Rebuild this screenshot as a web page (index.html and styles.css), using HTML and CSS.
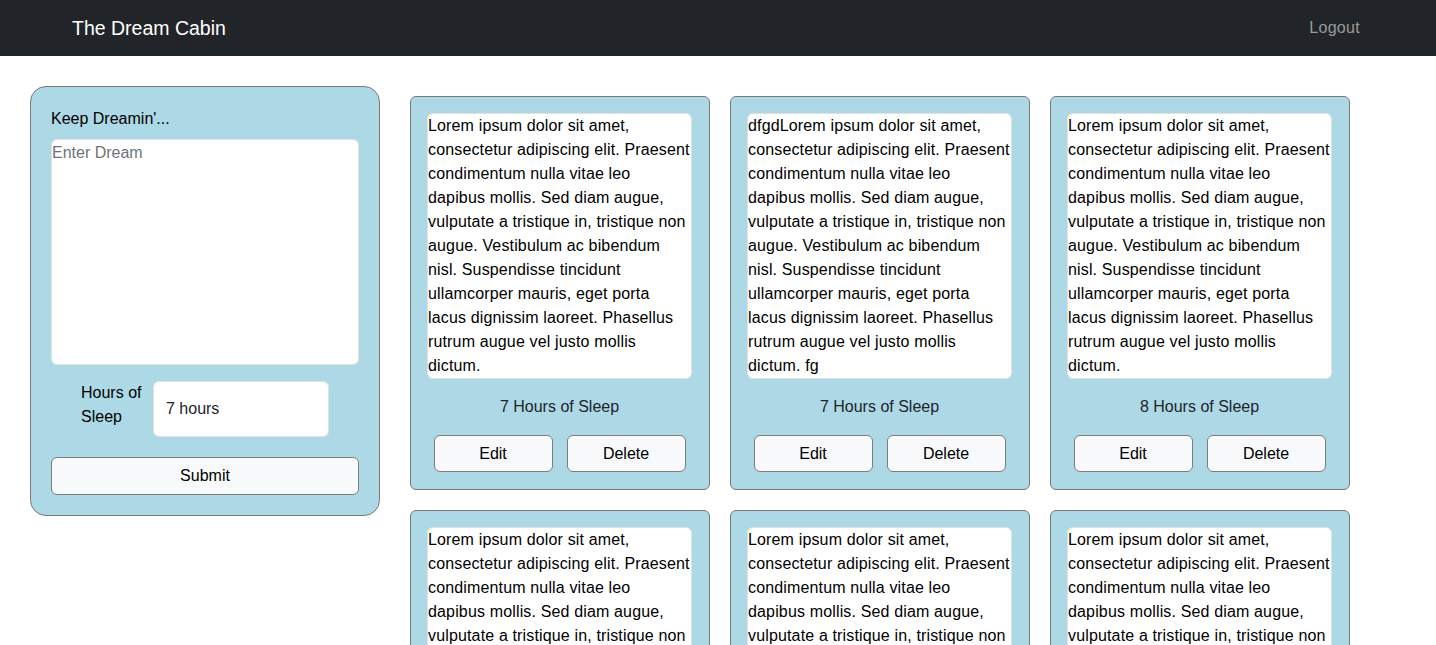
FILE: index.html
```html
<!DOCTYPE html>
<html lang="en">
<head>
    <meta charset="UTF-8">
    <meta name="viewport" content="width=device-width, initial-scale=1.0">
    <title>The Dream Cabin</title>
    <link rel="stylesheet" href="styles.css">
</head>
<body>
    <!-- 顶部导航 -->
    <nav class="navbar">
        <span class="brand">The Dream Cabin</span>
        <a class="nav-link" href="#">Logout</a>
    </nav>

    <div class="page">
        <!-- 新梦想表单 -->
        <form class="dream-form">
            <label for="dream" class="form-label">Keep Dreamin'...</label>
            <textarea id="dream" class="dream-input" placeholder="Enter Dream"></textarea>
            <div class="hours-row">
                <label for="hours" class="hours-label">Hours of Sleep</label>
                <input type="text" id="hours" class="hours-input" value="7 hours">
            </div>
            <button type="button" class="btn btn-block">Submit</button>
        </form>

        <!-- 梦想列表 -->
        <div class="dream-grid">
            <div class="dream-card">
                <div class="dream-text">Lorem ipsum dolor sit amet, consectetur adipiscing elit. Praesent condimentum nulla vitae leo dapibus mollis. Sed diam augue, vulputate a tristique in, tristique non augue. Vestibulum ac bibendum nisl. Suspendisse tincidunt ullamcorper mauris, eget porta lacus dignissim laoreet. Phasellus rutrum augue vel justo mollis dictum.</div>
                <p class="sleep">7 Hours of Sleep</p>
                <div class="card-buttons">
                    <button class="btn">Edit</button>
                    <button class="btn">Delete</button>
                </div>
            </div>
            <div class="dream-card">
                <div class="dream-text">dfgdLorem ipsum dolor sit amet, consectetur adipiscing elit. Praesent condimentum nulla vitae leo dapibus mollis. Sed diam augue, vulputate a tristique in, tristique non augue. Vestibulum ac bibendum nisl. Suspendisse tincidunt ullamcorper mauris, eget porta lacus dignissim laoreet. Phasellus rutrum augue vel justo mollis dictum. fg</div>
                <p class="sleep">7 Hours of Sleep</p>
                <div class="card-buttons">
                    <button class="btn">Edit</button>
                    <button class="btn">Delete</button>
                </div>
            </div>
            <div class="dream-card">
                <div class="dream-text">Lorem ipsum dolor sit amet, consectetur adipiscing elit. Praesent condimentum nulla vitae leo dapibus mollis. Sed diam augue, vulputate a tristique in, tristique non augue. Vestibulum ac bibendum nisl. Suspendisse tincidunt ullamcorper mauris, eget porta lacus dignissim laoreet. Phasellus rutrum augue vel justo mollis dictum.</div>
                <p class="sleep">8 Hours of Sleep</p>
                <div class="card-buttons">
                    <button class="btn">Edit</button>
                    <button class="btn">Delete</button>
                </div>
            </div>
            <div class="dream-card">
                <div class="dream-text">Lorem ipsum dolor sit amet, consectetur adipiscing elit. Praesent condimentum nulla vitae leo dapibus mollis. Sed diam augue, vulputate a tristique in, tristique non augue. Vestibulum ac bibendum nisl. Suspendisse tincidunt ullamcorper mauris, eget porta lacus dignissim laoreet. Phasellus rutrum augue vel justo mollis dictum.</div>
                <p class="sleep">7 Hours of Sleep</p>
                <div class="card-buttons">
                    <button class="btn">Edit</button>
                    <button class="btn">Delete</button>
                </div>
            </div>
            <div class="dream-card">
                <div class="dream-text">Lorem ipsum dolor sit amet, consectetur adipiscing elit. Praesent condimentum nulla vitae leo dapibus mollis. Sed diam augue, vulputate a tristique in, tristique non augue. Vestibulum ac bibendum nisl. Suspendisse tincidunt ullamcorper mauris, eget porta lacus dignissim laoreet. Phasellus rutrum augue vel justo mollis dictum.</div>
                <p class="sleep">7 Hours of Sleep</p>
                <div class="card-buttons">
                    <button class="btn">Edit</button>
                    <button class="btn">Delete</button>
                </div>
            </div>
            <div class="dream-card">
                <div class="dream-text">Lorem ipsum dolor sit amet, consectetur adipiscing elit. Praesent condimentum nulla vitae leo dapibus mollis. Sed diam augue, vulputate a tristique in, tristique non augue. Vestibulum ac bibendum nisl. Suspendisse tincidunt ullamcorper mauris, eget porta lacus dignissim laoreet. Phasellus rutrum augue vel justo mollis dictum.</div>
                <p class="sleep">7 Hours of Sleep</p>
                <div class="card-buttons">
                    <button class="btn">Edit</button>
                    <button class="btn">Delete</button>
                </div>
            </div>
        </div>
    </div>
</body>
</html>
```

FILE: styles.css
```css
* {
    box-sizing: border-box;
}
body {
    margin: 0;
    font-family: 'Liberation Sans', Arial, sans-serif;
    font-size: 16px;
    line-height: 24px;
    color: #212529;
    background-color: #fff;
}
.navbar {
    height: 56px;
    background-color: #212529;
    display: flex;
    align-items: center;
    justify-content: space-between;
    padding: 0 76px 0 72px;
}
.brand {
    color: #fff;
    font-size: 19.5px;
    line-height: 30px;
}
.nav-link {
    color: rgba(255, 255, 255, 0.55);
    text-decoration: none;
    letter-spacing: 0.3px;
}
.page {
    display: flex;
    align-items: flex-start;
    gap: 30px;
    padding: 30px 0 0 30px;
}
.dream-form {
    width: 350px;
    flex-shrink: 0;
    background-color: #add8e6;
    border: 1px solid #7a7a7a;
    border-radius: 16px;
    padding: 20px;
    display: flex;
    flex-direction: column;
}
.form-label {
    color: #000;
    margin-bottom: 8px;
}
.dream-input {
    height: 226px;
    width: 100%;
    padding: 1px 0 0;
    border: 1px solid #dee2e6;
    border-radius: 6px;
    font-family: inherit;
    font-size: 16px;
    line-height: 24px;
    resize: none;
    background-color: #fff;
}
.dream-input::placeholder {
    color: #6c757d;
}
.hours-row {
    display: flex;
    align-items: flex-start;
    justify-content: center;
    gap: 10px;
    margin-top: 16px;
}
.hours-label {
    width: 62px;
    color: #000;
}
.hours-input {
    width: 176px;
    height: 56px;
    padding: 0 12px;
    border: 1px solid #dee2e6;
    border-radius: 6px;
    font-family: inherit;
    font-size: 16px;
    color: #212529;
    background-color: #fff;
}
.btn {
    height: 37px;
    background-color: #f8f9fa;
    border: 1px solid #7d7d7d;
    border-radius: 6px;
    font-family: inherit;
    font-size: 16px;
    color: #000;
    padding: 0 12px;
    cursor: pointer;
}
.btn-block {
    width: 100%;
    height: 38px;
    margin-top: 20px;
}
.dream-grid {
    display: grid;
    grid-template-columns: repeat(3, 300px);
    gap: 20px;
    margin-top: 10px;
}
.dream-card {
    background-color: #add8e6;
    border: 1px solid #7a7a7a;
    border-radius: 6px;
    padding: 16px 17px 17px 16px;
}
.dream-text {
    background-color: #fff;
    border: 1px solid #dee2e6;
    border-radius: 6px;
    color: #000;
    letter-spacing: 0.15px;
}
.sleep {
    margin: 16px 0;
    text-align: center;
}
.card-buttons {
    display: flex;
    justify-content: center;
    gap: 14px;
}
.card-buttons .btn {
    width: 119px;
}
```
